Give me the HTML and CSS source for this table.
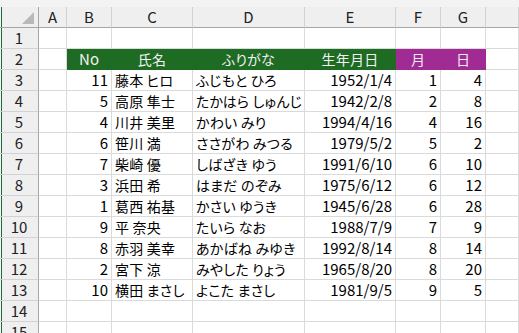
FILE: index.html
```html
<!DOCTYPE html>
<html lang="ja">
<head>
    <meta charset="UTF-8">
    <title>名簿</title>
    <link rel="stylesheet" href="styles.css">
</head>
<body>
    <div class="strip"></div>

    <div class="sheet">
        <!-- column headers -->
        <div class="hd corner"><span class="tri"></span></div>
        <div class="hd col">A</div>
        <div class="hd col">B</div>
        <div class="hd col">C</div>
        <div class="hd col">D</div>
        <div class="hd col">E</div>
        <div class="hd col">F</div>
        <div class="hd col">G</div>
        <div class="hd col"></div>

        <div class="hd row">1</div>
        <div class="c"></div><div class="c"></div><div class="c"></div><div class="c"></div><div class="c"></div><div class="c"></div><div class="c"></div><div class="c"></div>

        <div class="hd row">2</div>
        <div class="c"></div>
        <div class="c green mid">No</div>
        <div class="c green mid jp">氏名</div>
        <div class="c green mid jp">ふりがな</div>
        <div class="c green mid jp">生年月日</div>
        <div class="c purple mid jp">月</div>
        <div class="c purple mid jp">日</div>
        <div class="c"></div>

        <div class="hd row">3</div>
        <div class="c"></div><div class="c num">11</div><div class="c jp">藤本 ヒロ</div><div class="c jp">ふじもと ひろ</div><div class="c num">1952/1/4</div><div class="c num">1</div><div class="c num">4</div><div class="c"></div>

        <div class="hd row">4</div>
        <div class="c"></div><div class="c num">5</div><div class="c jp">高原 隼士</div><div class="c jp">たかはら しゅんじ</div><div class="c num">1942/2/8</div><div class="c num">2</div><div class="c num">8</div><div class="c"></div>

        <div class="hd row">5</div>
        <div class="c"></div><div class="c num">4</div><div class="c jp">川井 美里</div><div class="c jp">かわい みり</div><div class="c num">1994/4/16</div><div class="c num">4</div><div class="c num">16</div><div class="c"></div>

        <div class="hd row">6</div>
        <div class="c"></div><div class="c num">6</div><div class="c jp">笹川 満</div><div class="c jp">ささがわ みつる</div><div class="c num">1979/5/2</div><div class="c num">5</div><div class="c num">2</div><div class="c"></div>

        <div class="hd row">7</div>
        <div class="c"></div><div class="c num">7</div><div class="c jp">柴崎 優</div><div class="c jp">しばざき ゆう</div><div class="c num">1991/6/10</div><div class="c num">6</div><div class="c num">10</div><div class="c"></div>

        <div class="hd row">8</div>
        <div class="c"></div><div class="c num">3</div><div class="c jp">浜田 希</div><div class="c jp">はまだ のぞみ</div><div class="c num">1975/6/12</div><div class="c num">6</div><div class="c num">12</div><div class="c"></div>

        <div class="hd row">9</div>
        <div class="c"></div><div class="c num">1</div><div class="c jp">葛西 祐基</div><div class="c jp">かさい ゆうき</div><div class="c num">1945/6/28</div><div class="c num">6</div><div class="c num">28</div><div class="c"></div>

        <div class="hd row">10</div>
        <div class="c"></div><div class="c num">9</div><div class="c jp">平 奈央</div><div class="c jp">たいら なお</div><div class="c num">1988/7/9</div><div class="c num">7</div><div class="c num">9</div><div class="c"></div>

        <div class="hd row">11</div>
        <div class="c"></div><div class="c num">8</div><div class="c jp">赤羽 美幸</div><div class="c jp">あかばね みゆき</div><div class="c num">1992/8/14</div><div class="c num">8</div><div class="c num">14</div><div class="c"></div>

        <div class="hd row">12</div>
        <div class="c"></div><div class="c num">2</div><div class="c jp">宮下 涼</div><div class="c jp">みやした りょう</div><div class="c num">1965/8/20</div><div class="c num">8</div><div class="c num">20</div><div class="c"></div>

        <div class="hd row">13</div>
        <div class="c"></div><div class="c num">10</div><div class="c jp">横田 まさし</div><div class="c jp">よこた まさし</div><div class="c num">1981/9/5</div><div class="c num">9</div><div class="c num">5</div><div class="c"></div>

        <div class="hd row">14</div>
        <div class="c"></div><div class="c"></div><div class="c"></div><div class="c"></div><div class="c"></div><div class="c"></div><div class="c"></div><div class="c"></div>

        <div class="hd row">15</div>
        <div class="c"></div><div class="c"></div><div class="c"></div><div class="c"></div><div class="c"></div><div class="c"></div><div class="c"></div><div class="c"></div>
    </div>
</body>
</html>
```

FILE: styles.css
```css
body {
    margin: 0;
    overflow: hidden;
    background: #fff;
    font-family: "Noto Sans CJK JP", "Noto Sans", sans-serif;
    font-size: 15px;
    font-feature-settings: "palt";
    color: #000;
}

.strip {
    height: 7px;
    background: #f3f3f3;
}

.sheet {
    display: grid;
    grid-template-columns: 39px 28px 45px 81px 112px 91px 45px 45px 1fr;
    grid-template-rows: 21px;
    grid-auto-rows: 21px;
}

.c, .hd {
    box-sizing: border-box;
    border-right: 1px solid #dadada;
    border-bottom: 1px solid #dadada;
    padding: 0 3px;
    line-height: 20px;
    white-space: nowrap;
    overflow: hidden;
}

/* japanese text runs a size smaller so kana fit the cell */
.jp {
    font-size: 14px;
    letter-spacing: 0.2px;
}

/* headers */
.hd {
    background: #efefef;
    color: #222;
    text-align: center;
    border-color: #d2d2d2;
}
.hd.col {
    border-bottom-color: #a6a6a6;
}
.hd.row, .hd.corner {
    border-right-color: #a6a6a6;
    background: linear-gradient(to right, #f3f3f3 1px, #1f6b3f 1px, #1f6b3f 2px, #efefef 2px);
}
.hd.corner {
    position: relative;
    border-bottom-color: #a6a6a6;
}
.tri {
    position: absolute;
    right: 4px;
    bottom: 3px;
    width: 0;
    height: 0;
    border-left: 12px solid transparent;
    border-bottom: 12px solid #b8b8b8;
}

.num { text-align: right; }
.mid { text-align: center; }

.green {
    background: #1e6b24;
    border-color: #1e6b24;
    color: #f2f2f2;
}
.purple {
    background: #a02b93;
    border-color: #a02b93;
    color: #f6eaf4;
}
```
